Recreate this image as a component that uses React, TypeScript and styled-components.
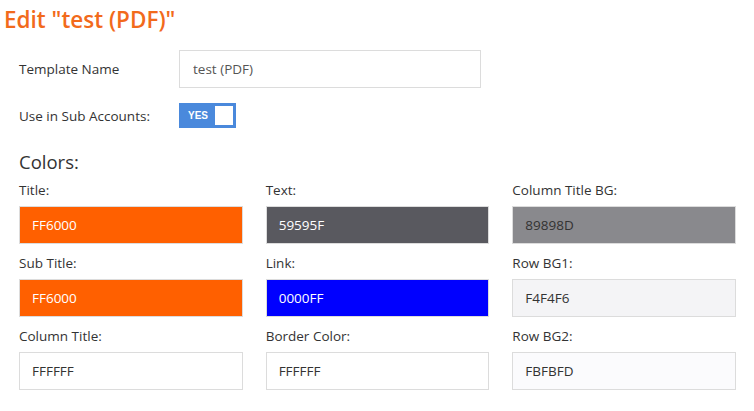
import React from "react";
import styled, { createGlobalStyle } from "styled-components";

const GlobalStyle = createGlobalStyle`
  body {
    margin: 0;
    background: #ffffff;
    font-family: "Open Sans", "Liberation Sans", sans-serif;
    color: #333333;
  }
`;

type Swatch = { label: string; value: string; light?: boolean };

const SWATCHES: Swatch[] = [
  { label: "Title:", value: "FF6000" },
  { label: "Text:", value: "59595F" },
  { label: "Column Title BG:", value: "89898D", light: true },
  { label: "Sub Title:", value: "FF6000" },
  { label: "Link:", value: "0000FF" },
  { label: "Row BG1:", value: "F4F4F6", light: true },
  { label: "Column Title:", value: "FFFFFF", light: true },
  { label: "Border Color:", value: "FFFFFF", light: true },
  { label: "Row BG2:", value: "FBFBFD", light: true },
];

const App: React.FC = () => {
  return (
    <>
      <GlobalStyle />
      <Page>
        <Heading>Edit "test (PDF)"</Heading>
        <Form>
          <FieldRow>
            <FieldLabel>Template Name</FieldLabel>
            <TextInput defaultValue="test (PDF)" />
          </FieldRow>
          <FieldRow>
            <FieldLabel>Use in Sub Accounts:</FieldLabel>
            <Toggle>
              <ToggleText>YES</ToggleText>
              <Knob />
            </Toggle>
          </FieldRow>
          <SectionTitle>Colors:</SectionTitle>
          <ColorGrid>
            {SWATCHES.map((s, i) => (
              <ColorField key={i}>
                <ColorLabel>{s.label}</ColorLabel>
                <ColorBox $bg={"#" + s.value} $light={s.light}>
                  {s.value}
                </ColorBox>
              </ColorField>
            ))}
          </ColorGrid>
        </Form>
      </Page>
    </>
  );
};

export default App;

const Page = styled.div`
  width: 754px;
  padding: 4px 0 0 4px;
  box-sizing: border-box;
`;

const Heading = styled.h1`
  margin: 0;
  font-size: 22.5px;
  line-height: 31px;
  font-weight: 600;
  color: #f26a1b;
`;

const Form = styled.div`
  padding: 15px 18px 0 15px;
`;

const FieldRow = styled.div`
  display: flex;
  align-items: center;
  margin-bottom: 15px;
`;

const FieldLabel = styled.div`
  width: 160px;
  font-size: 13.5px;
  color: #333333;
`;

const TextInput = styled.input`
  width: 302px;
  height: 38px;
  box-sizing: border-box;
  border: 1px solid #dcdcdc;
  padding: 0 13px;
  font-family: "Open Sans", "Liberation Sans", sans-serif;
  font-size: 13.5px;
  color: #555555;
  outline: none;
`;

const Toggle = styled.div`
  width: 57px;
  height: 25px;
  box-sizing: border-box;
  background: #4a89dc;
  display: flex;
  align-items: center;
  justify-content: space-between;
  padding: 0 3px 0 9px;
`;

const ToggleText = styled.span`
  font-family: "Liberation Sans", Arial, sans-serif;
  font-weight: 700;
  font-size: 10px;
  color: #ffffff;
`;

const Knob = styled.span`
  width: 18px;
  height: 19px;
  background: #ffffff;
`;

const SectionTitle = styled.h2`
  margin: 22px 0 7px;
  font-size: 18.5px;
  line-height: 24px;
  font-weight: 400;
  color: #333333;
`;

const ColorGrid = styled.div`
  display: grid;
  grid-template-columns: repeat(3, 1fr);
  column-gap: 23px;
  row-gap: 10px;
`;

const ColorField = styled.div`
  display: flex;
  flex-direction: column;
`;

const ColorLabel = styled.div`
  font-size: 13.5px;
  line-height: 18px;
  margin-bottom: 7px;
  color: #333333;
`;

const ColorBox = styled.div<{ $bg: string; $light?: boolean }>`
  height: 38px;
  box-sizing: border-box;
  border: 1px solid #dcdcdc;
  background: ${(p) => p.$bg};
  color: ${(p) => (p.$light ? "#333333" : "#ffffff")};
  display: flex;
  align-items: center;
  padding: 0 12px;
  font-size: 13.5px;
`;
